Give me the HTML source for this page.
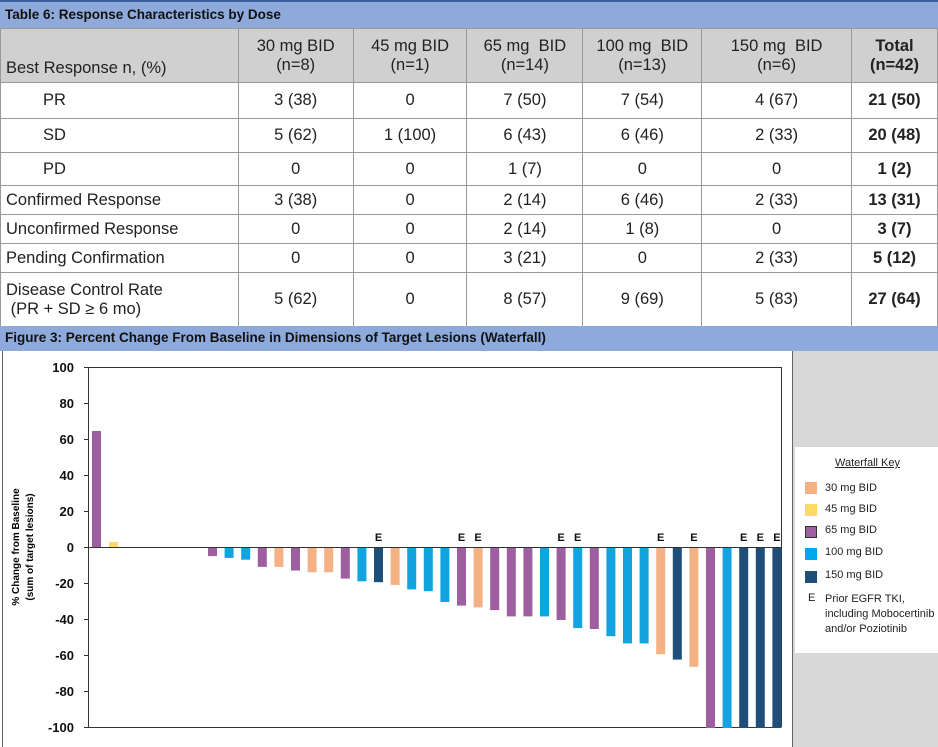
<!DOCTYPE html>
<html><head><meta charset="utf-8"><style>
*{margin:0;padding:0;box-sizing:border-box}
body{width:938px;height:747px;background:#fff;font-family:"Liberation Sans",sans-serif;position:relative;overflow:hidden}
.bar{position:absolute;left:0;width:938px;background:#8eaadb;font-weight:bold;font-size:13.5px;color:#111;padding-left:5px;border-top:2px solid #3d5f9e}
table{position:absolute;left:0;top:28px;border-collapse:collapse;width:938px;font-size:16.5px;color:#222}
td{border:1px solid #999;text-align:center;line-height:19px}
td.l{text-align:left;padding-left:5px}
td.i{padding-left:42px}
tr.h td{background:#d0d0d0}
td.b{font-weight:bold}
</style></head><body>
<div class="bar" style="top:0;height:28px;line-height:26px">Table 6: Response Characteristics by Dose</div>
<table>
<colgroup><col style="width:238px"><col style="width:115px"><col style="width:114px"><col style="width:116px"><col style="width:119px"><col style="width:150px"><col style="width:86px"></colgroup>
<tr class="h" style="height:54px"><td class="l" style="vertical-align:bottom;padding-bottom:4px">Best Response n, (%)</td><td>30 mg BID<br>(n=8)</td><td>45 mg BID<br>(n=1)</td><td>65 mg&nbsp; BID<br>(n=14)</td><td>100 mg&nbsp; BID<br>(n=13)</td><td>150 mg&nbsp; BID<br>(n=6)</td><td class="b">Total<br>(n=42)</td></tr>
<tr style="height:36px"><td class="l i">PR</td><td>3 (38)</td><td>0</td><td>7 (50)</td><td>7 (54)</td><td>4 (67)</td><td class="b">21 (50)</td></tr>
<tr style="height:34px"><td class="l i">SD</td><td>5 (62)</td><td>1 (100)</td><td>6 (43)</td><td>6 (46)</td><td>2 (33)</td><td class="b">20 (48)</td></tr>
<tr style="height:33px"><td class="l i">PD</td><td>0</td><td>0</td><td>1 (7)</td><td>0</td><td>0</td><td class="b">1 (2)</td></tr>
<tr style="height:29px"><td class="l">Confirmed Response</td><td>3 (38)</td><td>0</td><td>2 (14)</td><td>6 (46)</td><td>2 (33)</td><td class="b">13 (31)</td></tr>
<tr style="height:29px"><td class="l">Unconfirmed Response</td><td>0</td><td>0</td><td>2 (14)</td><td>1 (8)</td><td>0</td><td class="b">3 (7)</td></tr>
<tr style="height:29px"><td class="l">Pending Confirmation</td><td>0</td><td>0</td><td>3 (21)</td><td>0</td><td>2 (33)</td><td class="b">5 (12)</td></tr>
<tr style="height:54px"><td class="l">Disease Control Rate<br>&nbsp;(PR + SD ≥ 6 mo)</td><td>5 (62)</td><td>0</td><td>8 (57)</td><td>9 (69)</td><td>5 (83)</td><td class="b">27 (64)</td></tr>
</table>
<div class="bar" style="top:326px;height:25px;line-height:23px;border-top:none">Figure 3: Percent Change From Baseline in Dimensions of Target Lesions (Waterfall)</div>
<div style="position:absolute;left:793px;top:351px;width:145px;height:396px;background:#d8d8d8"></div>
<div style="position:absolute;left:2px;top:351px;width:791px;height:396px;border-left:1px solid #666;border-right:1px solid #666;background:#fff"></div>
<div style="position:absolute;left:795px;top:447px;width:143px;height:206px;background:#fff;font-size:11px;color:#222">
<div style="position:absolute;left:40px;top:10px;text-decoration:underline">Waterfall Key</div>
<div style="position:absolute;left:10px;top:35px;width:12px;height:12px;background:#f4b183"></div><div style="position:absolute;left:30px;top:35px">30 mg BID</div>
<div style="position:absolute;left:10px;top:57px;width:12px;height:12px;background:#ffd966"></div><div style="position:absolute;left:30px;top:56px">45 mg BID</div>
<div style="position:absolute;left:10px;top:79px;width:12px;height:12px;background:#9e5fa0;border:1px solid #333"></div><div style="position:absolute;left:30px;top:77px">65 mg BID</div>
<div style="position:absolute;left:10px;top:101px;width:12px;height:12px;background:#00a8ec"></div><div style="position:absolute;left:30px;top:99px">100 mg BID</div>
<div style="position:absolute;left:10px;top:124px;width:12px;height:12px;background:#1f4e79"></div><div style="position:absolute;left:30px;top:122px">150 mg BID</div>
<div style="position:absolute;left:13px;top:145px">E</div><div style="position:absolute;left:30px;top:145px;line-height:15px">Prior EGFR TKI,<br>including Mobocertinib<br>and/or Poziotinib</div>
</div>
<svg style="position:absolute;left:0;top:0" width="938" height="747" font-family="Liberation Sans" font-weight="bold">
<g font-size="13" text-anchor="end" fill="#111">
<text x="74" y="372">100</text><text x="74" y="408">80</text><text x="74" y="444">60</text><text x="74" y="480">40</text><text x="74" y="516">20</text><text x="74" y="552">0</text><text x="74" y="588">-20</text><text x="74" y="624">-40</text><text x="74" y="660">-60</text><text x="74" y="696">-80</text><text x="74" y="732">-100</text>
</g>
<text transform="translate(19,547) rotate(-90)" font-size="10" text-anchor="middle">% Change from Baseline</text>
<text transform="translate(33,547) rotate(-90)" font-size="10" text-anchor="middle">(sum of target lesions)</text>
<g stroke="#333" stroke-width="1">
<line x1="88.5" y1="367" x2="88.5" y2="727"/><line x1="88" y1="367.5" x2="781" y2="367.5"/><line x1="781.5" y1="367" x2="781.5" y2="727"/><line x1="84" y1="727.5" x2="781" y2="727.5"/><line x1="88" y1="547.5" x2="781" y2="547.5"/>
<line x1="84" y1="367.5" x2="88" y2="367.5"/><line x1="84" y1="403.5" x2="88" y2="403.5"/><line x1="84" y1="439.5" x2="88" y2="439.5"/><line x1="84" y1="475.5" x2="88" y2="475.5"/><line x1="84" y1="511.5" x2="88" y2="511.5"/><line x1="84" y1="547.5" x2="88" y2="547.5"/><line x1="84" y1="583.5" x2="88" y2="583.5"/><line x1="84" y1="619.5" x2="88" y2="619.5"/><line x1="84" y1="655.5" x2="88" y2="655.5"/><line x1="84" y1="691.5" x2="88" y2="691.5"/>
</g>
<rect x="92" y="431" width="9" height="116" fill="#9e5fa0"/>
<rect x="109" y="542" width="9" height="5" fill="#ffd966"/>
<g id="bars"></g>
<g id="es" font-size="11" text-anchor="middle" fill="#111"></g>
</svg>
<script>
var C={o:"#f4b183",p:"#9e5fa0",b:"#12a3e0",d:"#1f4e79"};
var d=[["p",4.5],["b",5.5],["b",6.5],["p",10.5],["o",10.5],["p",12.5],["o",13.5],["o",13.5],["p",17],["b",18.5],["d",19,1],["o",20.5],["b",23],["b",24],["b",30],["p",32,1],["o",33,1],["p",34.5],["p",38],["p",38],["b",38],["p",40,1],["b",44.5,1],["p",45],["b",49],["b",53],["b",53],["o",59,1],["d",62],["o",66,1],["p",100],["b",100],["d",100,1],["d",100,1],["d",100,1]];
var s="",e="";
d.forEach(function(v,i){var x=208+i*16.6;s+='<rect x="'+x.toFixed(1)+'" y="548" width="9" height="'+(v[1]*1.8).toFixed(1)+'" fill="'+C[v[0]]+'"/>';if(v[2])e+='<text x="'+(x+4.5).toFixed(1)+'" y="541">E</text>';});
document.getElementById("bars").innerHTML=s;document.getElementById("es").innerHTML=e;
</script>
</body></html>
